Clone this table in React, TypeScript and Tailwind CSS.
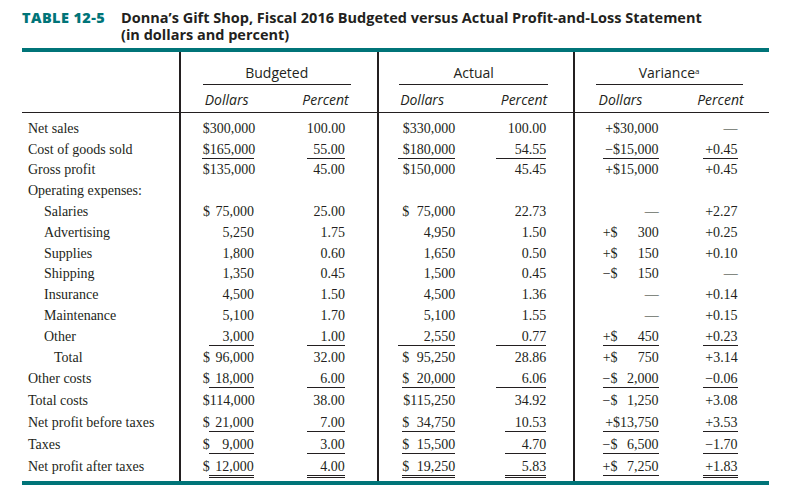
import React from "react";

type Row = {
  label: string;
  indent?: number;
  cells?: string[];
  // underline per cell: 0 none, 1 single, 2 double
  u?: number[];
  // optional underline widths per cell
  uw?: (number | undefined)[];
  h: string;
};

const serif = "font-['Liberation_Serif','Times_New_Roman',serif]";
const sans = "font-['Open_Sans','Noto_Sans',sans-serif]";

// slot geometry per data column: margin-left inside its group, width, default underline width, $ offset
const slots = [
  { ml: "ml-[22px]", w: 51, uw: 45, pre: "" },
  { ml: "ml-[53px]", w: 38, uw: 38, pre: "" },
  { ml: "ml-[19px]", w: 57, uw: 57, pre: "pl-[4px]" },
  { ml: "ml-[41px]", w: 50, uw: 50, pre: "" },
  { ml: "ml-[28px]", w: 56, uw: 56, pre: "" },
  { ml: "ml-[44px]", w: 35, uw: 35, pre: "" },
];

const rows: Row[] = [
  { label: "Net sales", h: "h-[24.8px] pt-[7.9px]", cells: ["$300,000", "100.00", "$330,000", "100.00", "+$30,000", "—"] },
  {
    label: "Cost of goods sold",
    h: "h-[20.8px] pt-[3.9px]",
    cells: ["$165,000", "55.00", "$180,000", "54.55", "−$15,000", "+0.45"],
    u: [1, 1, 1, 1, 1, 1],
    uw: [52],
  },
  { label: "Gross profit", h: "h-[20.8px] pt-[3.9px]", cells: ["$135,000", "45.00", "$150,000", "45.45", "+$15,000", "+0.45"] },
  { label: "Operating expenses:", h: "h-[20.8px] pt-[3.9px]" },
  { label: "Salaries", indent: 1, h: "h-[20.8px] pt-[3.9px]", cells: ["$ 75,000", "25.00", "$ 75,000", "22.73", "—", "+2.27"] },
  { label: "Advertising", indent: 1, h: "h-[20.8px] pt-[3.9px]", cells: ["5,250", "1.75", "4,950", "1.50", "+$ 300", "+0.25"] },
  { label: "Supplies", indent: 1, h: "h-[20.8px] pt-[3.9px]", cells: ["1,800", "0.60", "1,650", "0.50", "+$ 150", "+0.10"] },
  { label: "Shipping", indent: 1, h: "h-[20.8px] pt-[3.9px]", cells: ["1,350", "0.45", "1,500", "0.45", "−$ 150", "—"] },
  { label: "Insurance", indent: 1, h: "h-[20.8px] pt-[3.9px]", cells: ["4,500", "1.50", "4,500", "1.36", "—", "+0.14"] },
  { label: "Maintenance", indent: 1, h: "h-[20.8px] pt-[3.9px]", cells: ["5,100", "1.70", "5,100", "1.55", "—", "+0.15"] },
  {
    label: "Other",
    indent: 1,
    h: "h-[20.8px] pt-[3.9px]",
    cells: ["3,000", "1.00", "2,550", "0.77", "+$ 450", "+0.23"],
    u: [1, 1, 1, 1, 1, 1],
  },
  { label: "Total", indent: 2, h: "h-[20.8px] pt-[3.9px]", cells: ["$ 96,000", "32.00", "$ 95,250", "28.86", "+$ 750", "+3.14"] },
  {
    label: "Other costs",
    h: "h-[21.8px] pt-[4.9px]",
    cells: ["$ 18,000", "6.00", "$ 20,000", "6.06", "−$ 2,000", "−0.06"],
    u: [1, 1, 1, 1, 1, 1],
    uw: [undefined, undefined, 53],
  },
  { label: "Total costs", h: "h-[21.8px] pt-[4.9px]", cells: ["$114,000", "38.00", "$115,250", "34.92", "−$ 1,250", "+3.08"] },
  {
    label: "Net profit before taxes",
    h: "h-[21.8px] pt-[4.9px]",
    cells: ["$ 21,000", "7.00", "$ 34,750", "10.53", "+$13,750", "+3.53"],
    u: [1, 1, 1, 1, 1, 1],
    uw: [undefined, undefined, 53, 41],
  },
  {
    label: "Taxes",
    h: "h-[21.8px] pt-[4.9px]",
    cells: ["$ 9,000", "3.00", "$ 15,500", "4.70", "−$ 6,500", "−1.70"],
    u: [1, 1, 1, 1, 1, 1],
    uw: [undefined, undefined, 53, 41],
  },
  {
    label: "Net profit after taxes",
    h: "h-[27.2px] pt-[4.9px]",
    cells: ["$ 12,000", "4.00", "$ 19,250", "5.83", "+$ 7,250", "+1.83"],
    u: [2, 2, 2, 2, 1, 2],
    uw: [undefined, undefined, 53, 41],
  },
];

const indents = ["pl-[6px]", "pl-[22px]", "pl-[32px]"];

function Value({ text, col }: { text: string; col: number }) {
  const m = text.match(/^([+−]?\$) (.+)$/);
  if (m) {
    return (
      <div className="flex w-full whitespace-nowrap">
        <span className={slots[col].pre}>{m[1]}</span>
        <span className="ml-auto">{m[2].trim()}</span>
      </div>
    );
  }
  return <div className="w-full whitespace-nowrap text-right">{text}</div>;
}

function DataCell({ text, col, u, uw }: { text: string; col: number; u: number; uw?: number }) {
  const s = slots[col];
  const width = uw ?? s.uw;
  return (
    <div className={`${s.ml} flex flex-col`} style={{ width: s.w }}>
      <div className="flex leading-[15px]">
        <Value text={text} col={col} />
      </div>
      {u === 1 && <div className="mt-[1px] h-px self-end bg-[#231f20]" style={{ width }} />}
      {u === 2 && (
        <div className="mt-[1px] h-[3px] self-end border-y border-[#231f20]" style={{ width }} />
      )}
    </div>
  );
}

function GroupHeader({ title, sup, line, subs }: { title: string; sup?: boolean; line: string; subs: string }) {
  return (
    <div className="flex flex-col pt-[12px]">
      <div className={`${line} text-center leading-[18px] text-[14px]`}>
        {title}
        {sup && <sup className="text-[8px] align-top leading-none relative top-[3px]">a</sup>}
      </div>
      <div className={`${line} mt-[2.5px] h-px bg-[#231f20]`} />
      <div className={`${subs} mt-[6px] flex justify-between italic leading-[18px] text-[14px]`}>
        <span>Dollars</span>
        <span>Percent</span>
      </div>
    </div>
  );
}

export default function App() {
  const groupWidths = ["w-[200px]", "w-[197px]", "w-[198px]"];
  return (
    <div className="w-[791px] h-[492px] bg-white text-[#231f20] overflow-hidden">
      <div className={`${sans} flex pl-[22px] pt-[8.9px] text-[14.5px] leading-[17px] font-bold`}>
        <div className="w-[99px] shrink-0 text-[#007478] font-extrabold tracking-[0.4px]">TABLE 12-5</div>
        <div>
          <div>Donna’s Gift Shop, Fiscal 2016 Budgeted versus Actual Profit-and-Loss Statement</div>
          <div>(in dollars and percent)</div>
        </div>
      </div>

      <div className="mx-[22px] mt-[5.1px] border-y-4 border-[#007478]">
        <div className={`${sans} flex h-[61px] border-b border-[#231f20]`}>
          <div className="w-[158px]" />
          <div className={`${groupWidths[0]} border-l-2 border-[#231f20]`}>
            <GroupHeader title="Budgeted" line="ml-[22px] w-[148px]" subs="ml-[24px] w-[144px]" />
          </div>
          <div className={`${groupWidths[1]} border-l-2 border-[#231f20]`}>
            <GroupHeader title="Actual" line="ml-[20px] w-[149px]" subs="ml-[21px] w-[147px]" />
          </div>
          <div className={`${groupWidths[2]} border-l-2 border-[#231f20]`}>
            <GroupHeader title="Variance" sup line="ml-[21px] w-[147px]" subs="ml-[24px] w-[145px]" />
          </div>
        </div>

        <div className={`${serif} text-[14px]`}>
          {rows.map((r, i) => (
            <div key={i} className="flex">
              <div className={`w-[158px] ${r.h} ${indents[r.indent ?? 0]} leading-[15px] whitespace-nowrap`}>{r.label}</div>
              {[0, 1, 2].map((g) => (
                <div key={g} className={`${groupWidths[g]} ${r.h} flex border-l-2 border-[#231f20]`}>
                  {r.cells &&
                    [0, 1].map((k) => {
                      const c = g * 2 + k;
                      return <DataCell key={k} text={r.cells![c]} col={c} u={r.u?.[c] ?? 0} uw={r.uw?.[c]} />;
                    })}
                </div>
              ))}
            </div>
          ))}
        </div>
      </div>
    </div>
  );
}
